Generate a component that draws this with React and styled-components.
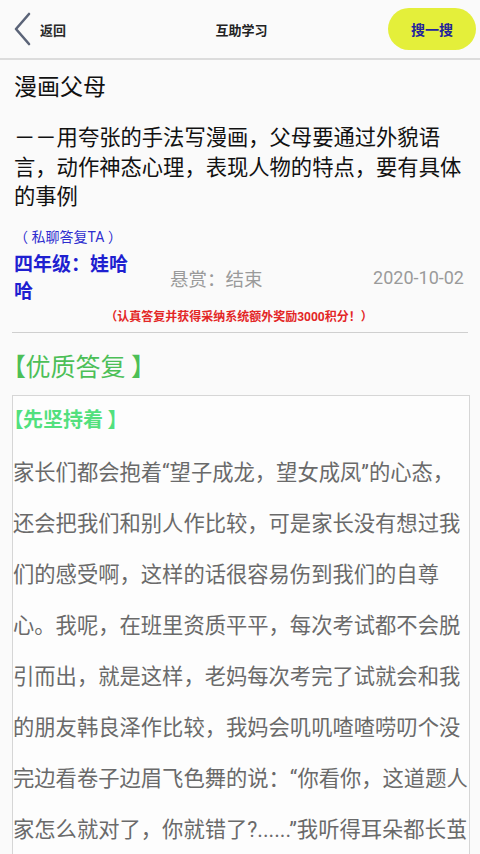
import React from "react";
import styled, { createGlobalStyle } from "styled-components";

const GlobalStyle = createGlobalStyle`
  html, body {
    margin: 0;
    padding: 0;
    background: #fafafa;
  }
  body {
    font-family: Roboto, "Noto Sans CJK SC", sans-serif;
    color: #111;
  }
`;

const App = () => {
  return (
    <Page>
      <GlobalStyle />
      <Header>
        <BackButton>
          <svg width="18" height="34" viewBox="0 0 18 34">
            <path
              d="M16 2 L3 17 L16 32"
              fill="none"
              stroke="#5b6478"
              strokeWidth="2.6"
              strokeLinecap="round"
              strokeLinejoin="round"
            />
          </svg>
          <BackText>返回</BackText>
        </BackButton>
        <HeaderTitle>互助学习</HeaderTitle>
        <SearchButton>搜一搜</SearchButton>
      </Header>

      <Question>
        <Title>漫画父母</Title>
        <Description>
          －－用夸张的手法写漫画，父母要通过外貌语言，动作神态心理，表现人物的特点，要有具体的事例
        </Description>
        <PrivateLink>（ 私聊答复TA ）</PrivateLink>
        <MetaRow>
          <Author>四年级：娃哈哈</Author>
          <Reward>悬赏：结束</Reward>
          <DateText>2020-10-02</DateText>
        </MetaRow>
        <Notice>（认真答复并获得采纳系统额外奖励3000积分！）</Notice>
      </Question>

      <Divider />

      <SectionTitle>【优质答复 】</SectionTitle>
      <AnswerBox>
        <AnswerTitle>【先坚持着 】</AnswerTitle>
        <AnswerText>
          家长们都会抱着“望子成龙，望女成凤”的心态，还会把我们和别人作比较，可是家长没有想过我们的感受啊，这样的话很容易伤到我们的自尊心。我呢，在班里资质平平，每次考试都不会脱引而出，就是这样，老妈每次考完了试就会和我的朋友韩良泽作比较，我妈会叽叽喳喳唠叨个没完边看卷子边眉飞色舞的说：“你看你，这道题人家怎么就对了，你就错了?......”我听得耳朵都长茧子了。
        </AnswerText>
      </AnswerBox>
    </Page>
  );
};

export default App;

const Page = styled.div`
  width: 480px;
  min-height: 854px;
  background: #fafafa;
`;

const Header = styled.header`
  height: 58px;
  display: grid;
  grid-template-columns: 1fr auto 1fr;
  align-items: center;
  padding: 0 4px 0 13px;
  border-bottom: 2px solid #dcdcdc;
`;

const BackButton = styled.div`
  display: flex;
  align-items: center;
  gap: 9px;
`;

const BackText = styled.span`
  font-size: 13px;
  font-weight: 700;
  color: #2a2a2a;
`;

const HeaderTitle = styled.div`
  font-size: 13px;
  font-weight: 700;
  color: #222;
  margin-left: -6px;
`;

const SearchButton = styled.div`
  justify-self: end;
  width: 88px;
  height: 42px;
  border-radius: 21px;
  background: #e4ef3a;
  color: #23239e;
  font-size: 14px;
  font-weight: 700;
  display: flex;
  align-items: center;
  justify-content: center;
`;

const Question = styled.section`
  padding: 13px 16px 0 14px;
`;

const Title = styled.h1`
  margin: 0;
  font-size: 23px;
  line-height: 30px;
  font-weight: 400;
  color: #111;
`;

const Description = styled.p`
  margin: 20px 0 0;
  font-size: 21.3px;
  line-height: 29.5px;
  color: #111;
`;

const PrivateLink = styled.div`
  margin-top: 16px;
  font-size: 14px;
  line-height: 18px;
  color: #2d2dcf;
`;

const MetaRow = styled.div`
  margin-top: 5px;
  display: flex;
  align-items: center;
`;

const Author = styled.div`
  width: 122px;
  margin-right: 34px;
  font-size: 19px;
  line-height: 27px;
  font-weight: 700;
  color: #1f1fd0;
`;

const Reward = styled.div`
  flex: 1;
  font-size: 18.5px;
  color: #9a9a9a;
`;

const DateText = styled.div`
  font-size: 18px;
  color: #9a9a9a;
`;

const Notice = styled.div`
  margin-top: 4px;
  text-align: center;
  font-size: 12px;
  line-height: 16px;
  font-weight: 700;
  color: #e32626;
`;

const Divider = styled.hr`
  margin: 7px 12px 0;
  border: none;
  border-top: 1.5px solid #cfcfcf;
`;

const SectionTitle = styled.h2`
  margin: 19px 0 0 13px;
  font-size: 25px;
  line-height: 32px;
  font-weight: 400;
  color: #4cbf57;
  font-feature-settings: "palt";
`;

const AnswerBox = styled.div`
  margin: 11px 10px 0 12px;
  border: 1px solid #d6d6d6;
  border-bottom: none;
  background: #fdfdfd;
  padding-top: 10px;
`;

const AnswerTitle = styled.div`
  font-size: 20px;
  line-height: 28px;
  font-weight: 700;
  color: #52e07d;
  font-feature-settings: "palt";
`;

const AnswerText = styled.p`
  margin: 13px 0 0;
  font-size: 21.3px;
  line-height: 51px;
  color: #6a6a6a;
`;
